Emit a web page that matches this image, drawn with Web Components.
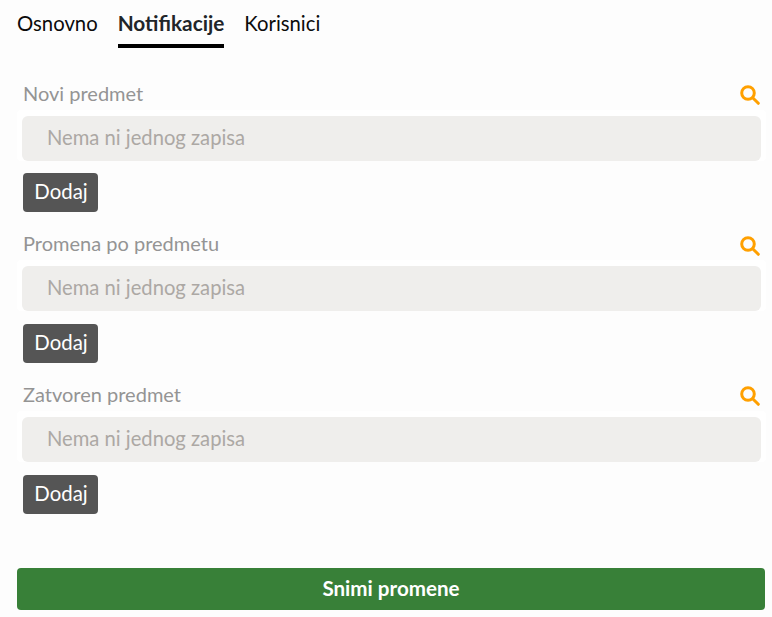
<!DOCTYPE html>
<html>
<head>
<meta charset="utf-8">
<style>
    html, body { margin: 0; background: #fdfdfd; }
    body { font-family: "Lato", "Noto Sans", sans-serif; height: 617px; overflow: hidden; }
</style>
</head>
<body>
<notif-page>
    <tab-bar>
        <tab-item>Osnovno</tab-item>
        <tab-item active>Notifikacije</tab-item>
        <tab-item>Korisnici</tab-item>
    </tab-bar>
    <notif-section>Novi predmet</notif-section>
    <notif-section>Promena po predmetu</notif-section>
    <notif-section>Zatvoren predmet</notif-section>
    <save-button>Snimi promene</save-button>
</notif-page>
<script>
customElements.define('notif-page', class extends HTMLElement {
    constructor() {
        super();
        const shadowRoot = this.attachShadow({mode: 'open'});
        shadowRoot.innerHTML = `
        <style>
            :host{
                display: flex;
                flex-direction: column;
                padding: 0 7px 0 17px;
            }
        </style>
        <slot></slot>
        `;
    }
});

customElements.define('tab-bar', class extends HTMLElement {
    constructor() {
        super();
        const shadowRoot = this.attachShadow({mode: 'open'});
        shadowRoot.innerHTML = `
        <style>
            :host{
                display: flex;
                gap: 20px;
                height: 48px;
                margin-bottom: 27.7px;
            }
        </style>
        <slot></slot>
        `;
    }
});

customElements.define('tab-item', class extends HTMLElement {
    constructor() {
        super();
        const shadowRoot = this.attachShadow({mode: 'open'});
        shadowRoot.innerHTML = `
        <style>
            :host{
                display: block;
                box-sizing: border-box;
                height: 48px;
                padding-top: 10px;
                font-size: 20.3px;
                line-height: 26px;
                color: #0b0b0b;
            }
            :host([active]){
                font-size: 20.8px;
                font-weight: 700;
                color: #212529;
                border-bottom: 4px solid #000;
            }
        </style>
        <slot></slot>
        `;
    }
});

customElements.define('notif-section', class extends HTMLElement {
    constructor() {
        super();
        const shadowRoot = this.attachShadow({mode: 'open'});
        shadowRoot.innerHTML = `
        <style>
            :host{
                display: block;
                padding: 0 4px 0 5px;
                height: 150.6px;
            }
            .head{
                display: flex;
                justify-content: space-between;
                align-items: center;
                height: 34px;
                font-size: 20px;
                color: #949494;
                padding-left: 1px;
            }
            .box{
                background: #fff;
                padding: 6px 5px 0;
                margin: 0 -5px;
                border-radius: 4px;
            }
            .empty{
                box-sizing: border-box;
                height: 45px;
                padding: 0 0 3px 25px;
                display: flex;
                align-items: center;
                background: #efeeec;
                border-radius: 6px;
                font-size: 20.2px;
                color: #aca8a4;
            }
            button{
                display: block;
                box-sizing: border-box;
                width: 75px;
                height: 39px;
                margin: 12.7px 0 0 1px;
                padding: 0 0 3px 1px;
                border: 0;
                border-radius: 4px;
                background: #555;
                color: #fff;
                font: inherit;
                font-size: 20.4px;
            }
            svg{ display: block; margin: 5px 1px 0 0; }
        </style>
        <div class="head">
            <span><slot></slot></span>
            <svg width="20" height="20" viewBox="0 0 20 20" fill="none" stroke="#ffa000" stroke-width="3">
                <circle cx="8" cy="8" r="6.3"/>
                <path d="M12.7 12.7L18.3 18.3" stroke-linecap="round"/>
            </svg>
        </div>
        <div class="box"><div class="empty">Nema ni jednog zapisa</div></div>
        <button>Dodaj</button>
        `;
    }
});

customElements.define('save-button', class extends HTMLElement {
    constructor() {
        super();
        const shadowRoot = this.attachShadow({mode: 'open'});
        shadowRoot.innerHTML = `
        <style>
            :host{
                display: flex;
                align-items: center;
                justify-content: center;
                box-sizing: border-box;
                height: 42px;
                padding-bottom: 2px;
                margin-top: 40.5px;
                border-radius: 4px;
                background: #388038;
                color: #fff;
                font-size: 20.6px;
                font-weight: 700;
            }
        </style>
        <slot></slot>
        `;
    }
});
</script>
</body>
</html>
